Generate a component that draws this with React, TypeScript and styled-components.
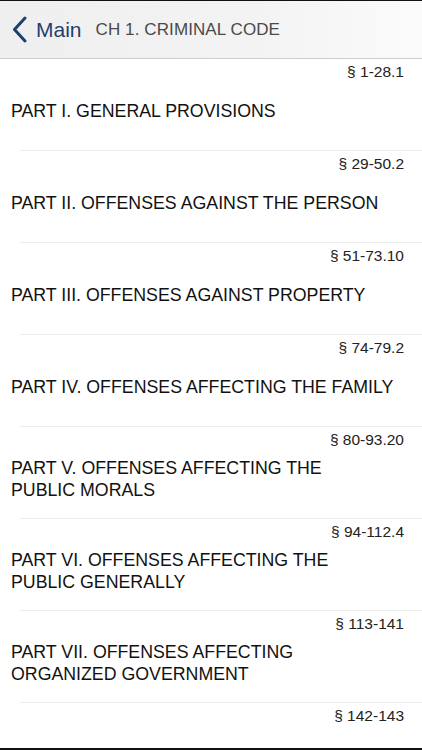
import React from 'react';
import styled, { createGlobalStyle } from 'styled-components';

interface Part {
  range: string;
  title?: string;
}

// line breaks follow the app's own wrapping; the last row is cut off by the
// bottom edge, so only its range shows
const parts: Part[] = [
  { range: '§ 1-28.1', title: 'PART I. GENERAL PROVISIONS' },
  { range: '§ 29-50.2', title: 'PART II. OFFENSES AGAINST THE PERSON' },
  { range: '§ 51-73.10', title: 'PART III. OFFENSES AGAINST PROPERTY' },
  { range: '§ 74-79.2', title: 'PART IV. OFFENSES AFFECTING THE FAMILY' },
  { range: '§ 80-93.20', title: 'PART V. OFFENSES AFFECTING THE\nPUBLIC MORALS' },
  { range: '§ 94-112.4', title: 'PART VI. OFFENSES AFFECTING THE\nPUBLIC GENERALLY' },
  { range: '§ 113-141', title: 'PART VII. OFFENSES AFFECTING\nORGANIZED GOVERNMENT' },
  { range: '§ 142-143' },
];

const GlobalStyle = createGlobalStyle`
  html, body {
    margin: 0;
    padding: 0;
    background: #fff;
  }
  body {
    font-family: "Liberation Sans", Arial, sans-serif;
    -webkit-font-smoothing: antialiased;
  }
`;

const Screen = styled.div`
  width: 422px;
  height: 750px;
  display: flex;
  flex-direction: column;
  overflow: hidden;
  border-top: 1px solid #111;
  border-bottom: 2px solid #111;
  box-sizing: border-box;
  background: #fff;
`;

const NavBar = styled.header`
  flex: none;
  height: 57px;
  display: flex;
  align-items: center;
  padding-left: 11px;
  background: linear-gradient(to right, #efefef 0%, #f3f3f3 60%, #fbfbfb 100%);
  border-bottom: 1px solid #cdcdcd;
`;

const BackButton = styled.button`
  display: flex;
  align-items: center;
  gap: 8px;
  padding: 0;
  border: none;
  background: none;
  color: #1f3f6e;
  font-family: "Liberation Sans", Arial, sans-serif;
  font-size: 21px;
  cursor: pointer;
`;

const NavTitle = styled.h1`
  margin: 0 0 0 14px;
  font-size: 17px;
  font-weight: normal;
  color: #4a4a4a;
  letter-spacing: 0.1px;
`;

const List = styled.ul`
  list-style: none;
  margin: 0;
  padding: 0;
  flex: 1;
  overflow: hidden;
`;

const Row = styled.li`
  position: relative;
  height: 92px;
  display: flex;
  flex-direction: column;

  &::after {
    content: '';
    position: absolute;
    left: 20px;
    right: 0;
    bottom: 0;
    height: 1px;
    background: #ececec;
  }
`;

const Range = styled.div`
  height: 26px;
  line-height: 26px;
  padding-right: 18px;
  text-align: right;
  font-size: 15.5px;
  color: #222;
`;

const TitleBox = styled.div`
  height: 52px;
  display: flex;
  align-items: center;
  padding: 0 10px 0 11px;
`;

const Title = styled.div`
  font-size: 17.75px;
  line-height: 22px;
  color: #111;
  white-space: pre-line;
`;

export default function App(): JSX.Element {
  return (
    <>
      <GlobalStyle />
      <Screen>
        <NavBar>
          <BackButton>
            <svg width="17" height="27" viewBox="0 0 17 27" fill="none">
              <path d="M14 2 L3.5 13.5 L14 25" stroke="#1f3f6e" strokeWidth="3" strokeLinecap="round" strokeLinejoin="round" />
            </svg>
            Main
          </BackButton>
          <NavTitle>CH 1. CRIMINAL CODE</NavTitle>
        </NavBar>
        <List>
          {parts.map((part) => (
            <Row key={part.range}>
              <Range>{part.range}</Range>
              {part.title && (
                <TitleBox>
                  <Title>{part.title}</Title>
                </TitleBox>
              )}
            </Row>
          ))}
        </List>
      </Screen>
    </>
  );
}
